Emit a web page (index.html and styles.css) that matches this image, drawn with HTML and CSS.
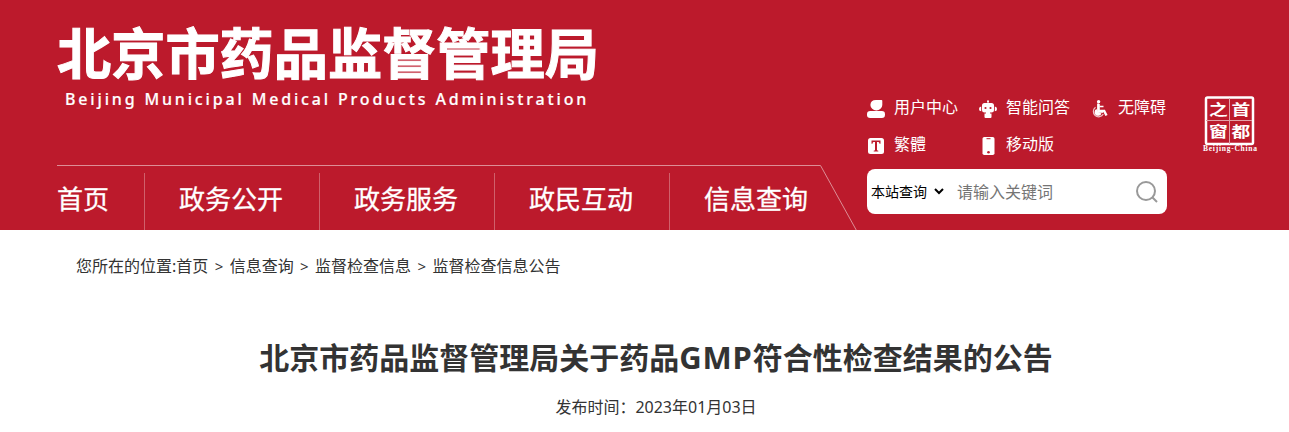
FILE: index.html
```html
<!DOCTYPE html>
<html lang="zh-CN">
<head>
  <meta charset="UTF-8">
  <meta name="viewport" content="width=device-width, initial-scale=1.0">
  <link rel="stylesheet" href="styles.css">
  <title>北京市药品监督管理局关于药品GMP符合性检查结果的公告</title>
</head>
<body>
  <header class="header">
    <div class="header-left">
      <div class="logo">北京市药品监督管理局</div>
      <div class="logo-en">Beijing Municipal Medical Products Administration</div>
      <nav class="nav">
        <svg class="nav-line" width="801" height="65" viewBox="0 0 801 65">
          <path d="M0 .5H763.500L799.500 65.500" fill="none" stroke="#dd8e96"/>
        </svg>
        <a class="nav-item">首页</a>
        <a class="nav-item">政务公开</a>
        <a class="nav-item">政务服务</a>
        <a class="nav-item">政民互动</a>
        <a class="nav-item">信息查询</a>
      </nav>
    </div>
    <div class="header-right">
      <div class="tools">
        <a class="tool">
          <svg width="18" height="18" viewBox="0 0 18 18" fill="#fff"><path d="M9 0h5.500q.8 0 .8.800V5A5.900 5.500 0 0 1 9.300 10.400 5.900 5.500 0 0 1 3.400 5Q3.600 0 9 0Z"/><rect y="11" width="18" height="7" rx="3.200"/></svg>
          <span>用户中心</span>
        </a>
        <a class="tool">
          <svg width="18" height="18" viewBox="0 0 18 18" fill="#fff"><circle cx="9" cy="1.200" r="1"/><path d="M8.500 1.500h1V4h-1zM5.500 3h7Q15 3 15 5.500v4.700Q15 12.500 12.500 12.500h-7Q3 12.500 3 10.200V5.500Q3 3 5.500 3Z"/><path d="M2.200 6.500v4.800Q0 11.200 0 9q0-2.300 2.200-2.500zM15.800 6.500v4.800Q18 11.200 18 9q0-2.300-2.200-2.500zM7 12h4v1.500h1.500V17q0 1-1 1h-5q-1 0-1-1v-3.500H7z"/><g fill="#bc1a2c"><circle cx="6.500" cy="8" r="1.100"/><circle cx="11.500" cy="8" r="1.100"/></g></svg>
          <span>智能问答</span>
        </a>
        <a class="tool">
          <svg width="18" height="18" viewBox="0 0 18 18" fill="none" stroke="#fff"><circle cx="7.600" cy="1.700" r="1.700" fill="#fff" stroke="none"/><path d="M7.600 4v7h5.600l2.300 4.500" stroke-width="2.400"/><path d="M7 3.500v8.500h5M8.500 6.500h4" stroke-width="1.500"/><path d="M4.500 7.200A5.300 5.300 0 1 0 12.300 14" stroke-width="1.200" opacity=".75"/><path d="M5.500 9A3.600 3.600 0 1 0 10.500 13.500L7 12Z" stroke="none" fill="#fff"/></svg>
          <span>无障碍</span>
        </a>
        <a class="tool">
          <svg width="18" height="18" viewBox="0 0 18 18"><rect x="1" y="1" width="16" height="16" rx="2.500" fill="#fff"/><path d="M4.500 3.500h9v3.200h-1q-.2-1.500-1-1.700H10v8.300l1.300.4v.9H6.700v-.9l1.300-.4V5H6.500q-.8.200-1 1.700h-1z" fill="#bc1a2c"/></svg>
          <span>繁體</span>
        </a>
        <a class="tool">
          <svg width="18" height="18" viewBox="0 0 18 18"><rect x="3.500" width="12" height="18" rx="1.800" fill="#fff"/><path d="M7.500 1.700h4" stroke="#bc1a2c"/><circle cx="9.500" cy="15.300" r="1.300" fill="#bc1a2c"/></svg>
          <span>移动版</span>
        </a>
      </div>
      <div class="search">
        <select class="search-scope">
          <option>本站查询</option>
        </select>
        <input class="search-input" type="text" placeholder="请输入关键词">
        <svg class="search-icon" width="22" height="22" viewBox="0 0 22 22" fill="none" stroke="#999" stroke-width="2"><circle cx="10" cy="10" r="9"/><path d="M16 16l5 5"/></svg>
      </div>
    </div>
    <svg class="seal" width="56" height="58" viewBox="0 0 56 58" fill="#fff">
      <rect x="4" y="2.500" width="47" height="46.500" rx="1.500" fill="none" stroke="#fff" stroke-width="2.500"/>
      <path d="M27.500 3v46M4 25.500h46" stroke="#e3a0a7" stroke-width="1"/>
      <g class="seal-text">
        <text transform="translate(7 19.500) scale(1.250 .950)">之</text>
        <text transform="translate(29.500 19.500) scale(1.250 .950)">首</text>
        <text transform="translate(7 42) scale(1.250 .950)">窗</text>
        <text transform="translate(29.500 42) scale(1.250 .950)">都</text>
      </g>
      <text class="seal-en" x="1" y="56" textLength="54">Beijing-China</text>
    </svg>
  </header>
  <main class="main">
    <div class="crumbs">
      <span>您所在的位置:首页</span><i>&gt;</i><span>信息查询</span><i>&gt;</i><span>监督检查信息</span><i>&gt;</i><span>监督检查信息公告</span>
    </div>
    <h1 class="title">北京市药品监督管理局关于药品<span class="title-en">GMP</span>符合性检查结果的公告</h1>
    <p class="date">发布时间：2023年01月03日</p>
  </main>
</body>
</html>
```
FILE: styles.css
```css
* {
  box-sizing: border-box;
}

body {
  margin: 0;
  background: #fff;
  color: #333;
  font: 16px/24px "Noto Sans", "Noto Sans CJK SC", sans-serif;
  overflow: hidden;
}

.header {
  display: flex;
  height: 230px;
  padding-left: 57px;
  background: #bc1a2c;
  color: #fff;
}

.header-left {
  display: flex;
  flex-direction: column;
  width: 810px;
}

.logo {
  height: 60px;
  margin-top: 21px;
  font-size: 54.2px;
  line-height: 60px;
  font-weight: bold;
  font-family: "Noto Sans CJK SC", sans-serif;
  white-space: nowrap;
  -webkit-text-stroke: 1px #fff;
}

.logo-en {
  height: 20px;
  padding-left: 8px;
  margin-top: 8px;
  font-size: 16px;
  line-height: 20px;
  font-weight: 500;
  letter-spacing: 2.84px;
  white-space: nowrap;
  -webkit-text-stroke: .2px #fff;
}

.nav {
  position: relative;
  display: flex;
  height: 65px;
  margin-top: auto;
  padding-top: 8px;
}

.nav-line {
  position: absolute;
  top: 0;
  left: 0;
}

.nav-item {
  width: 175px;
  padding-left: 34px;
  border-left: 1px solid #d0606b;
  font-size: 26px;
  line-height: 52px;
  -webkit-text-stroke: .3px #fff;
}

.nav-item:nth-of-type(1) {
  width: 87px;
  padding-left: 0;
  border-left: 0;
}

.header-right {
  width: 300px;
  padding-top: 89px;
}

.tools {
  display: grid;
  grid-template-columns: repeat(3, 112px);
  grid-auto-rows: 37px;
  height: 80px;
}

.tool {
  display: flex;
  align-items: center;
  gap: 9px;
  height: 37px;
  white-space: nowrap;
}

.tool span {
  margin-top: -2px;
}

.tool svg {
  margin-top: 2px;
}

.search {
  display: flex;
  align-items: center;
  height: 45px;
  padding-right: 9px;
  border-radius: 8px;
  background: #fff;
}

.search-scope {
  width: 80px;
  margin-top: -2px;
  border: 0;
  background: transparent;
  color: #000;
  font: 14px "Noto Sans CJK SC", sans-serif;
}

.search-input {
  flex: 1;
  min-width: 0;
  padding: 0 0 2px 10px;
  border: 0;
  background: transparent;
  font: 16px "Noto Sans CJK SC", sans-serif;
}

.seal {
  margin: 95px 0 0 35px;
}

.seal-text {
  font: 600 15px "Noto Sans CJK SC", sans-serif;
}

.seal-en {
  font: bold 7.5px "Liberation Serif", serif;
}

.main {
  width: 1200px;
  margin-left: 56px;
}

.crumbs {
  display: flex;
  padding: 24px 0 0 20px;
}

.crumbs i {
  width: 21.400px;
  font-size: 15px;
  font-style: normal;
  text-align: center;
}

.title {
  margin: 59px 0 0;
  font-size: 30px;
  line-height: 40px;
  text-align: center;
}

.title-en {
  font-size: 31px;
  letter-spacing: .8px;
}

.date {
  margin: 17px 0 0;
  text-align: center;
}
```
